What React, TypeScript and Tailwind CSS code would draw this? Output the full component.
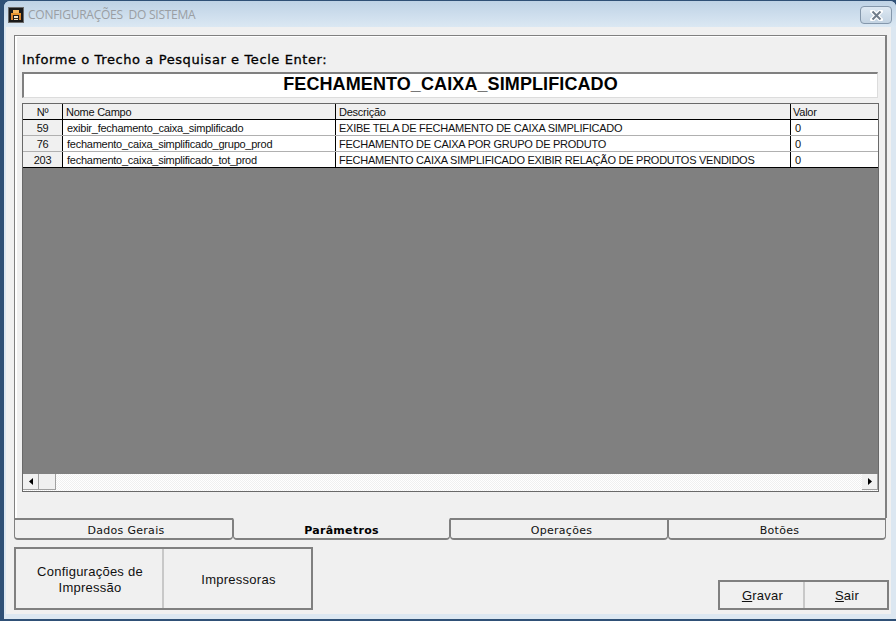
const rows = [
  { id: "59", name: "exibir_fechamento_caixa_simplificado", desc: "EXIBE TELA DE FECHAMENTO DE CAIXA SIMPLIFICADO", value: "0" },
  { id: "76", name: "fechamento_caixa_simplificado_grupo_prod", desc: "FECHAMENTO DE CAIXA POR GRUPO DE PRODUTO", value: "0" },
  { id: "203", name: "fechamento_caixa_simplificado_tot_prod", desc: "FECHAMENTO CAIXA SIMPLIFICADO EXIBIR RELAÇÃO DE PRODUTOS VENDIDOS", value: "0" },
];

const tabs = [
  { label: "Dados Gerais", width: "w-[219px]" },
  { label: "Parâmetros", width: "w-[217px]", active: true },
  { label: "Operações", width: "w-[218px]" },
  { label: "Botões", width: "w-[218px]" },
];

function AppIcon() {
  return (
    <svg width="16" height="16" viewBox="0 0 16 16" className="shrink-0">
      <rect width="16" height="16" fill="#6b6b6b" />
      <rect x="1" y="1" width="14" height="14" fill="#1a1a1a" />
      <rect x="5" y="3" width="6" height="3" fill="#f4b860" />
      <rect x="3" y="6" width="10" height="2" fill="#e8952f" />
      <rect x="3" y="8" width="2" height="5" fill="#d9822b" />
      <rect x="11" y="8" width="2" height="5" fill="#d9822b" />
      <rect x="6" y="9" width="4" height="4" fill="#f5e6c8" />
      <rect x="6" y="11" width="4" height="1" fill="#3a2a10" />
    </svg>
  );
}

function CloseGlyph() {
  return (
    <svg width="13" height="11" viewBox="0 0 13 11">
      <path d="M2.5 1.5L10.5 9.5M10.5 1.5L2.5 9.5" stroke="#ffffff" strokeWidth="4.5" strokeLinecap="square" />
      <path d="M2.5 1.5L10.5 9.5M10.5 1.5L2.5 9.5" stroke="#717d8a" strokeWidth="2" />
    </svg>
  );
}

function ArrowButton({ dir }: { dir: "left" | "right" }) {
  return (
    <div className="w-4 h-4 flex items-center justify-center bg-[#f0f0f0] border-r border-b border-[#a0a0a0] shrink-0">
      <svg width="4" height="7" viewBox="0 0 4 7">
        <path d={dir === "left" ? "M4 0V7L0 3.5Z" : "M0 0V7L4 3.5Z"} fill="#000" />
      </svg>
    </div>
  );
}

function GroupButton({ className, children }: { className: string; children: React.ReactNode }) {
  return (
    <div className={`flex items-center justify-center pt-[2px] pl-[2px] text-center text-[13px] leading-4 tracking-[0.25px] text-[#111] ${className}`}>
      {children}
    </div>
  );
}

export default function App() {
  return (
    <div className="w-[896px] h-[621px] overflow-hidden bg-[#2f5076] pt-px pl-[4px] font-['Liberation_Sans',sans-serif]">
      <div className="w-[892px] h-[618px] rounded-t-md bg-[#dce7f1]">
        <div className="h-[26px] flex items-center pt-[2px] pl-[4px] pr-[4px] rounded-t-md bg-gradient-to-b from-[#bed2e5] to-[#dbe8f3]">
          <AppIcon />
          <span className="ml-1 text-[12px] tracking-[-0.25px] text-[#9a9ea3] font-['Open_Sans',sans-serif] whitespace-pre">CONFIGURAÇÕES  DO SISTEMA</span>
          <div className="ml-auto w-[32px] h-[18px] flex items-center justify-center rounded-sm border border-[#8497ab] bg-gradient-to-b from-[#dde8f2] to-[#c3d3e2]">
            <CloseGlyph />
          </div>
        </div>
        <div className="h-[587px] w-[885px] ml-[2px] bg-[#f0f0f0] pl-[8px] pt-[8px]">
          <div className="w-[873px] h-[483px] border-t border-l border-r-2 border-[#808080] shadow-[inset_2px_1px_0_#ffffff] bg-[#f0f0f0] flex flex-col pl-[7px] pt-[16px]">
            <div className="h-[15px] flex items-center text-[13px] font-['DejaVu_Sans',sans-serif] text-black tracking-[0.6px] [-webkit-text-stroke:0.3px_black]">
              Informe o Trecho a Pesquisar e Tecle Enter:
            </div>
            <div className="mt-[5px] h-[26px] w-[856px] flex items-center justify-center pb-[2px] border-t-2 border-l-2 border-t-[#808080] border-l-[#808080] border-r border-b border-r-[#dcdcdc] border-b-[#dcdcdc] bg-white text-[18px] tracking-[0.1px] font-bold text-black">
              FECHAMENTO_CAIXA_SIMPLIFICADO
            </div>
            <div className="mt-[5px] w-[857px] h-[389px] flex flex-col border border-[#696969] text-[11px] tracking-[-0.25px] text-[#111]">
              <div className="h-[15px] flex bg-[#f0f0f0] border-b border-black shrink-0 box-content">
                <div className="w-[40px] text-center border-r border-black leading-[16px]">Nº</div>
                <div className="w-[273px] pl-[3px] border-r border-black leading-[16px]">Nome Campo</div>
                <div className="w-[455px] pl-[3px] border-r border-black leading-[16px]">Descrição</div>
                <div className="flex-1 pl-[2px] leading-[16px]">Valor</div>
              </div>
              {rows.map((r, i) => (
                <div key={r.id} className={`h-[16px] flex bg-white shrink-0 border-b ${i === rows.length - 1 ? "border-black" : "border-[#b0b0b0]"}`}>
                  <div className="w-[40px] text-center bg-[#f0f0f0] border-r border-black leading-[16px]">{r.id}</div>
                  <div className="w-[273px] pl-[4px] border-r border-black leading-[16px]">{r.name}</div>
                  <div className="w-[455px] pl-[3px] border-r border-black leading-[16px]">{r.desc}</div>
                  <div className="flex-1 pl-[4px] leading-[16px]">{r.value}</div>
                </div>
              ))}
              <div className="flex-1 bg-[#808080]" />
              <div className="h-[17px] flex shrink-0 bg-[repeating-conic-gradient(#f0f0f0_0_25%,#ffffff_0_50%)] bg-[length:2px_2px]">
                <ArrowButton dir="left" />
                <div className="w-[17px] h-4 bg-[#f0f0f0] border-r border-b border-[#a0a0a0]" />
                <div className="flex-1" />
                <ArrowButton dir="right" />
              </div>
            </div>
          </div>
          <div className="flex w-[873px] h-[22px]">
            {tabs.map((t) => (
              <div
                key={t.label}
                className={`${t.width} flex items-center justify-center pt-[4px] text-[11px] tracking-[0.3px] font-['DejaVu_Sans',sans-serif] border-b-2 border-x border-x-[#808080] border-b-[#808080] rounded-b-[4px] ${t.active ? "font-bold text-black border-t-2 border-t-transparent" : "pl-[5px] text-[#111] border-t-2 border-t-[#808080]"}`}
              >
                {t.label}
              </div>
            ))}
          </div>
          <div className="flex items-end justify-between mt-[7px] w-[875px]">
            <div className="flex w-[299px] h-[63px] border-2 border-[#808080]">
              <GroupButton className="w-[148px] border-r-2 border-r-[#c8c8c8]">
                Configurações de
                <br />
                Impressão
              </GroupButton>
              <GroupButton className="flex-1">Impressoras</GroupButton>
            </div>
            <div className="flex w-[171px] h-[30px] border-2 border-[#808080]">
              <GroupButton className="w-[85px] border-r-2 border-r-[#c8c8c8]">
                <span><u>G</u>ravar</span>
              </GroupButton>
              <GroupButton className="flex-1">
                <span><u>S</u>air</span>
              </GroupButton>
            </div>
          </div>
        </div>
      </div>
    </div>
  );
}
